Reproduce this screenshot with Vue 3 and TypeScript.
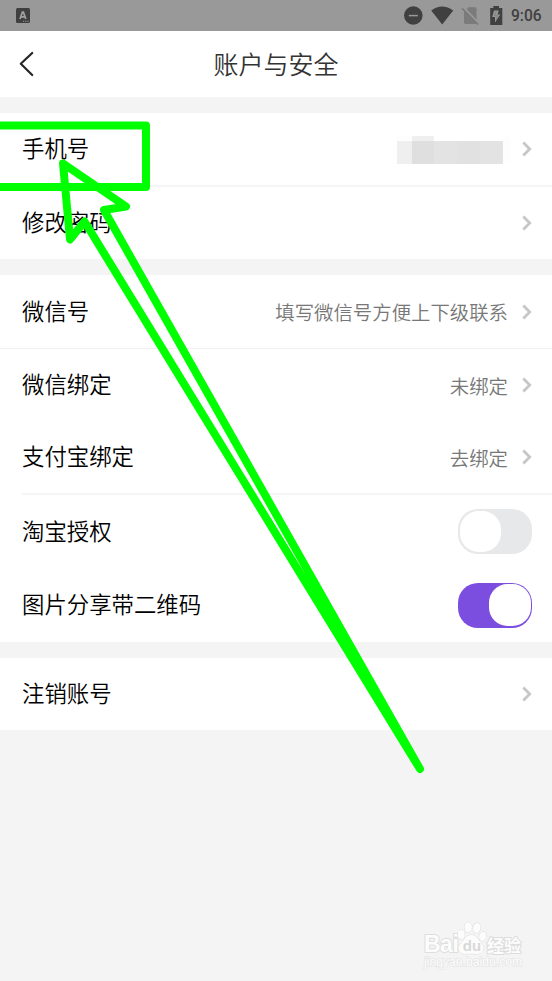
<script setup lang="ts">
interface Row {
  label: string
  height: number
  value?: string
  masked?: boolean
  toggle?: boolean
  on?: boolean
  line?: 'thick' | 'thin' | 'inset'
}

const groups: Row[][] = [
  [
    { label: '手机号', height: 74, masked: true, line: 'thick' },
    { label: '修改密码', height: 72 },
  ],
  [
    { label: '微信号', height: 74, value: '填写微信号方便上下级联系', line: 'thin' },
    { label: '微信绑定', height: 72, value: '未绑定' },
    { label: '支付宝绑定', height: 74, value: '去绑定', line: 'inset' },
    { label: '淘宝授权', height: 73, toggle: true, on: false },
    { label: '图片分享带二维码', height: 74, toggle: true, on: true },
  ],
  [{ label: '注销账号', height: 72 }],
]
</script>

<template>
  <div class="screen">
    <div class="status">
      <svg class="badge" width="14" height="15" viewBox="0 0 14 15">
        <rect width="14" height="15" rx="1.5" fill="#404040" />
        <path d="M4 11 6.4 4.2h1L9.8 11M4.9 8.9h4" fill="none" stroke="#a2a2a2" stroke-width="1.7" />
        <path d="M7 13.3h6" stroke="#999" stroke-width="1" stroke-dasharray="1.2 1" />
      </svg>
      <svg class="indicators" width="104" height="31" viewBox="0 0 104 31">
        <circle cx="9.3" cy="15.5" r="9.3" fill="#404040" />
        <path d="M4.8 15.6h9" stroke="#999" stroke-width="1.5" />
        <path d="M27.2 10.4Q38.200 2.600 49.200 10.4L38.200 24.500Z" fill="#404040" />
        <path d="M60.500 11.500 64.500 7.200H71a1.500 1.500 0 0 1 1.500 1.500V22.500a1.500 1.500 0 0 1-1.500 1.500H61.500a1.500 1.500 0 0 1-1.500-1.500V12Z" fill="#7b7b7b" />
        <path d="M58.700 7.300 75 24.300" stroke="#999" stroke-width="3" />
        <path d="M58 8.200 74 24.500" stroke="#757575" stroke-width="1.300" />
        <path d="M89.300 6h5.700v2h3.300V25H86.200V8h3.100Z" fill="#404040" />
        <path d="M90 10.500h4.800L93.500 14.500h2.800L91 22.500V17h-2.800Z" fill="#999" />
        <path d="M92.300 11.500 90.500 15.700h3.200L92 20" fill="none" stroke="#777" stroke-width=".7" />
      </svg>
      <span class="clock">9:06</span>
    </div>

    <header class="header">
      <svg class="back" width="15" height="26" viewBox="0 0 15 26">
        <path d="M13.200 2 1.800 12.800 13.200 24" fill="none" stroke="#262628" stroke-width="2.200" stroke-linecap="round" stroke-linejoin="round" />
      </svg>
      <h1 class="title">账户与安全</h1>
    </header>

    <main class="groups">
      <section v-for="(group, g) in groups" :key="g" class="group">
        <div
          v-for="row in group"
          :key="row.label"
          class="row"
          :class="row.line"
          :style="{ height: row.height + 'px' }"
        >
          <span class="label">{{ row.label }}</span>
          <span v-if="row.toggle" class="switch" :class="{ on: row.on }"><span class="knob"></span></span>
          <template v-else>
            <span v-if="row.value" class="value">{{ row.value }}</span>
            <svg v-if="row.masked" class="mask" width="114" height="28" viewBox="0 0 114 28">
              <path d="M0 0h15v5H0zM106 1h8v26h-8z" fill="#fdfdfd" />
              <path d="M15 0h22v5H15zM0 5h15v23H0z" fill="#efefef" />
              <path d="M15 5h22v23H15z" fill="#dfdfdf" />
              <path d="M37 5h69v23H37z" fill="#e3e3e3" />
              <path d="M60 5h23v23H60z" fill="#e1e1e1" />
            </svg>
            <svg class="chevron" width="10" height="16" viewBox="0 0 10 16">
              <path d="M1.300 1.600 7.700 8 1.300 14.400" fill="none" stroke="#c7c7c7" stroke-width="2.800" />
            </svg>
          </template>
        </div>
      </section>
    </main>

    <svg class="annotation" width="552" height="981" viewBox="0 0 552 981">
      <path d="M-10 125.500H146V187H-10" />
      <path d="M63 163.500 126 206.500 104 210 420 769 84.500 221.500 70 239.500Z" />
    </svg>

    <div class="watermark">
      <div class="brand">
        <span class="bai">Bai</span>
        <svg class="paw" width="30" height="34" viewBox="0 0 30 34">
          <g fill="#fcfcfc" stroke="#dedede" stroke-width="1">
            <ellipse cx="4.200" cy="13.500" rx="3.500" ry="4.700" />
            <ellipse cx="11.200" cy="6.200" rx="3.700" ry="5" />
            <ellipse cx="19.800" cy="7" rx="3.700" ry="5" transform="rotate(12 19.800 7)" />
            <ellipse cx="25.800" cy="15.300" rx="3.500" ry="4.700" transform="rotate(18 25.800 15.300)" />
            <path d="M14.500 14c5 0 5.500 4 8.500 6.500 6 5 3.500 12.500-2.500 12.500-3 0-9-.5-13 0-6 0-8-7-3-11.500C9 17.500 9 14 14.500 14Z" />
          </g>
          <text x="15" y="30" text-anchor="middle">du</text>
        </svg>
        <span class="jingyan">经验</span>
      </div>
      <span class="site">jingyan.baidu.com</span>
    </div>
  </div>
</template>

<style>
body {
  margin: 0;
  background: #f4f4f4;
}
</style>

<style scoped>
.screen {
  position: relative;
  width: 552px;
  height: 981px;
  overflow: hidden;
  background: #f4f4f4;
  font-family: "Noto Sans CJK SC", sans-serif;
  font-weight: 350;
}
.status {
  display: flex;
  align-items: center;
  box-sizing: border-box;
  height: 31px;
  padding: 0 10px 0 16px;
  background: #999;
}
.indicators {
  margin-left: auto;
  flex: none;
}
.clock {
  width: 31px;
  margin-left: 3px;
  padding-top: 1px;
  font: 500 15.6px/30px Roboto, sans-serif;
  color: #404040;
}
.header {
  display: flex;
  align-items: center;
  justify-content: center;
  position: relative;
  height: 66px;
  background: #fff;
}
.back {
  position: absolute;
  left: 19px;
  top: 20px;
}
.title {
  margin: 0;
  padding-bottom: 2px;
  font-size: 25px;
  line-height: 36px;
  font-weight: 350;
  color: #333;
}
.groups {
  display: flex;
  flex-direction: column;
  gap: 16px;
  padding-top: 16px;
}
.group {
  background: #fff;
}
.row {
  display: flex;
  align-items: center;
  position: relative;
  box-sizing: border-box;
  padding: 0 20px 0 22px;
}
.thick {
  border-bottom: 2px solid #f5f5f5;
}
.thin {
  border-bottom: 1px solid #f1f1f1;
}
.inset {
  padding-bottom: 2px;
  background: linear-gradient(#f5f5f5, #f5f5f5) 22px 100% / 100% 2px no-repeat;
}
.label {
  margin-right: auto;
  padding-bottom: 4px;
  font-size: 22.4px;
  line-height: 32px;
  color: #000;
}
.value {
  margin-right: 14px;
  padding-top: 1px;
  font-size: 19.4px;
  line-height: 28px;
  color: #777;
}
.mask {
  margin-right: 11px;
  margin-top: 2px;
}
.chevron {
  flex: none;
}
.switch {
  display: flex;
  box-sizing: border-box;
  width: 74px;
  height: 45px;
  padding: 2px;
  border-radius: 20px;
  background: #e6e8ea;
}
.knob {
  width: 41px;
  height: 41px;
  border-radius: 18.5px;
  background: #fff;
}
.switch.on {
  justify-content: flex-end;
  padding: 1.5px;
  background: #7c4ee0;
}
.on .knob {
  width: 42px;
  height: 42px;
}
.annotation {
  position: absolute;
  left: 0;
  top: 0;
  fill: none;
  stroke: #0f0;
  stroke-width: 8px;
  stroke-linecap: round;
  stroke-linejoin: round;
}
.watermark {
  position: absolute;
  left: 424px;
  top: 921px;
  width: 102px;
  color: #fcfcfc;
  paint-order: stroke fill;
}
.brand {
  display: flex;
  align-items: flex-end;
  height: 34px;
}
.bai {
  width: 33px;
  font: 700 23px/21px "Liberation Sans", sans-serif;
  letter-spacing: -0.5px;
  -webkit-text-stroke: 2px #dedede;
}
.paw {
  flex: none;
}
.paw text {
  font: 700 15px "Liberation Sans", sans-serif;
  fill: #d8d8d8;
}
.jingyan {
  font-size: 17px;
  line-height: 21px;
  font-weight: 700;
  white-space: nowrap;
  -webkit-text-stroke: 2px #dcdcdc;
}
.site {
  display: block;
  font: 12.2px/15px "Liberation Sans", sans-serif;
  white-space: nowrap;
  -webkit-text-stroke: 1.4px #e6e6e6;
}
</style>
